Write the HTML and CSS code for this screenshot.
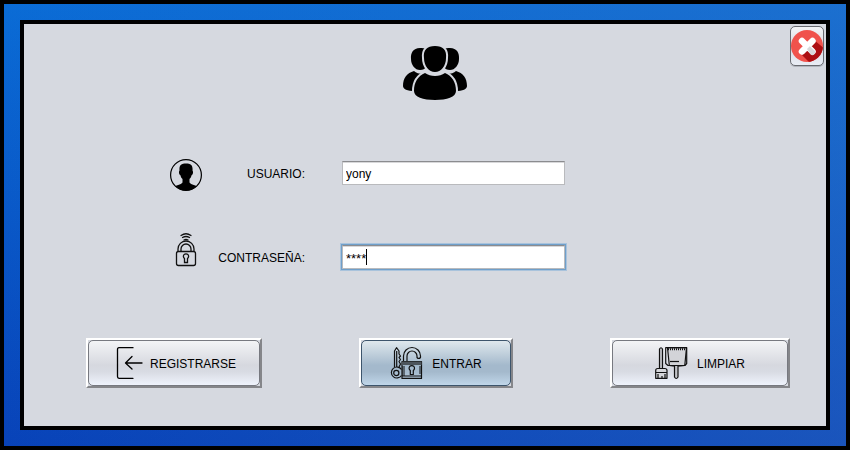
FILE: index.html
```html
<!DOCTYPE html>
<html lang="es">
<head>
<meta charset="utf-8">
<meta name="viewport" content="width=device-width, initial-scale=1">
<title>Inicio de sesión</title>
<link rel="stylesheet" href="styles.css">
</head>
<body>
<main class="panel">
  <button class="close" type="button" aria-label="Cerrar">
    <svg width="32" height="32" viewBox="0 0 32 32">
      <defs><clipPath id="disc"><circle cx="16" cy="16" r="16"/></clipPath></defs>
      <circle cx="16" cy="16" r="16" fill="#f0524c"/>
      <path clip-path="url(#disc)" d="M22 9l13 11v14H20L9 23l7-7z" fill="#ad0f12"/>
      <path d="M11 11l10.500 10.500M21.500 11L11 21.500" stroke="#fff" stroke-width="6.500" stroke-linecap="round"/>
      <path d="M16 19l2.800-2.800 5 4.600a2.800 2.800 0 0 1-4.400 3.400z" fill="#d8d8da"/>
    </svg>
  </button>
  <header class="header">
    <svg width="64" height="56" viewBox="0 0 64 56">
      <path d="M17 3C10 3 7.500 8 8 14c0 6 4 11 9 11 3 0 5-1 6-3V4c-1-1-4-1-6-1zM47 3c7 0 9.500 5 9 11 0 6-4 11-9 11-3 0-5-1-6-3V4c1-1 4-1 6-1z"/>
      <path d="M11 26C4 28 0 33 0 41c0 3 4 5 12 5l8-17c-4 0-7-1-9-3zM53 26c7 2 11 7 11 15 0 3-4 5-12 5l-8-17c4 0 7-1 9-3z"/>
      <g stroke="#d6d9e0" stroke-width="4" paint-order="stroke">
        <path d="M22 28c-7 3-11 9-11 18 0 6 9 9 21 9s21-3 21-9c0-9-4-15-11-18-3 2-6 3-10 3s-7-1-10-3z"/>
        <path d="M32 1c-8 0-12 4-11 12 0 8 5 14 11 14s11-6 11-14C44 5 40 1 32 1z"/>
      </g>
    </svg>
  </header>

  <form class="form" id="login">
    <div class="row">
      <svg width="32" height="50" viewBox="0 0 32 50">
        <defs><clipPath id="face"><circle cx="16" cy="27" r="15.500"/></clipPath></defs>
        <circle cx="16" cy="27" r="15.400" fill="none" stroke="#000" stroke-width="1.200"/>
        <path clip-path="url(#face)" d="M16 15.500c-5 0-7 2-6.500 7-1 1-.5 4 .8 4.500.5 2 1.200 3 2.200 4v3.500C11 37 6 37 2 40v5h28v-5c-4-3-9-3-10.500-5.500V31c1-1 1.700-2 2.200-4 1.300-.5 1.800-3.500.8-4.500.5-5-1.500-7-6.500-7z"/>
      </svg>
      <label for="user">USUARIO:</label>
      <span class="field"><input id="user" type="text" value="yony"></span>
    </div>
    <div class="row">
      <svg width="32" height="50" viewBox="0 0 32 50" fill="none" stroke="#111" stroke-width="1.300" stroke-linecap="round">
        <path d="M11 3.500q5-3.500 10 0M12.500 5.500q3.500-2 7 0M14 8q2-1 4 0"/>
        <path d="M8 19v-2a8 8 0 0 1 16 0v2M11 19v-2a5 5 0 0 1 10 0v2"/>
        <rect x="6.500" y="19.500" width="19" height="14" rx="2"/>
        <path d="M14.500 26.500a2.600 2.600 0 1 1 3 0v4h-3z"/>
      </svg>
      <label for="pass">CONTRASEÑA:</label>
      <span class="field focused"><input id="pass" type="text" value="****" autocomplete="off"><span class="caret"></span></span>
    </div>
  </form>

  <div class="actions">
    <button class="btn register" type="button">
      <svg width="28" height="32" viewBox="0 0 28 32" fill="none" stroke="#000" stroke-width="1.300" stroke-linecap="round" stroke-linejoin="round">
        <path d="M21 .7H7Q5.500.7 5.500 2.500v27q0 1.800 1.500 1.800h14M30 16H14M20 9.500L13.500 16l6.500 6"/>
      </svg>
      <span>REGISTRARSE</span>
    </button>
    <button class="btn enter" type="submit" form="login">
      <svg width="32" height="32" viewBox="0 0 32 32" fill="none" stroke="#111" stroke-width="1.200" stroke-linejoin="round">
        <path d="M4.500 20V4L6.500.7 9 4v3l1.500 2L9 10.500l1.500 2L9 14.500l1.500 2.500L9 20M6.700 4v16"/>
        <path d="M11.500 22.500a5.500 5.500 0 1 0 0 6"/>
        <circle cx="6.300" cy="26" r="2.600"/>
        <path d="M13.500 14V9a8.500 8.500 0 0 1 17 0v1.500q-1.700 2-3.500 0V9a5 5 0 0 0-10 0v5"/>
        <path d="M12 14.500h19.500v17H12z"/>
        <path d="M12 16.300h19.500" stroke-width="3.500" stroke="#4d555c"/>
        <path d="M12 20h3M12 22h3M12 24h3M12 26h3M12 28h3M29 20h2.500M29 22h2.500M29 24h2.500M29 26h2.500" stroke-width="1"/>
        <path d="M12 29h19.500M12 31.300h19.500"/>
        <path d="M20.300 23.500a2.700 2.700 0 1 1 3 0v4h-3z"/>
      </svg>
      <span>ENTRAR</span>
    </button>
    <button class="btn clean" type="button">
      <svg width="32" height="32" viewBox="0 0 32 32" fill="none" stroke="#111" stroke-width="1.200" stroke-linejoin="round">
        <path d="M4.500 21V2q1.500-2.500 3 0v19" fill="#c4c5c9"/>
        <path d="M.7 31.300V23.500Q.7 21.500 2.700 21.500h7Q12 21.500 12 23.500v7.800z" fill="#d5d6da"/>
        <path d="M.7 25.500H12M3 31v-4M7 31v-2M10 31v-4"/>
        <path d="M12.500.7h19l-1.700 17.600q-8.500 1.500-15.500 0z" fill="#d3d4d8"/>
        <path d="M10.700.7h21v15.800l-1.800 2H13l-2.300-2z"/>
        <path d="M13 2.300h17" stroke-width="2" stroke-dasharray="1 1"/>
        <path d="M15 14.500h9"/>
        <path d="M19.500 19v11q1.700 3 3.500 0V19" fill="#c4c5c9"/>
      </svg>
      <span>LIMPIAR</span>
    </button>
  </div>
</main>
</body>
</html>
```
FILE: styles.css
```css
* {
  box-sizing: border-box;
}

body {
  margin: 0;
  min-height: 100vh;
  display: flex;
  padding: 16px;
  border: 4px solid #000;
  background: linear-gradient(to right, rgba(60, 118, 195, 0), rgba(60, 118, 195, 0.35)),
    linear-gradient(#0a6cd6, #0842b8);
  font: 12px/16px "Liberation Sans", Arial, sans-serif;
  color: #000;
}

svg {
  display: block;
  flex: none;
  overflow: visible;
}

.panel {
  position: relative;
  flex: 1;
  border: 4px solid #000;
  background: #d6d9e0;
  padding-top: 21px;
}

.close {
  position: absolute;
  top: 2px;
  right: 2px;
  width: 34px;
  height: 40px;
  padding: 0;
  display: grid;
  place-items: center;
  border: 1px solid #686a70;
  border-radius: 5px;
  background: linear-gradient(#f4f5f7, #d8dae1 50%, #e9edf5);
  box-shadow: 0 1px 0 #b0b4bc;
}

.header {
  display: flex;
  justify-content: center;
  padding-left: 20px;
}

.form {
  display: grid;
  gap: 34px;
  margin: 47px 261px 56px 146px;
}

.row {
  display: grid;
  grid-template-columns: 32px 103px 1fr;
  align-items: center;
}

.row label {
  padding-top: 2px;
  text-align: right;
}

.field {
  position: relative;
  margin-left: 37px;
}

.field input {
  display: block;
  width: 100%;
  height: 24px;
  padding: 2px 3px 0;
  border: 1px solid #b9babd;
  border-top-color: #8b8c8f;
  border-radius: 0;
  outline: none;
  background: #fff;
  box-shadow: inset 0 1px 0 #d8d8da;
  font: inherit;
  color: #000;
}

.focused input {
  box-shadow: inset 0 1px 0 #d8d8da, 0 0 0 1px #6f9fca, 0 0 0 2px #a9c3dc;
  font-size: 13px;
}

.caret {
  position: absolute;
  left: 24px;
  top: 4px;
  width: 1px;
  height: 16px;
  background: #000;
}

.actions {
  display: flex;
  justify-content: space-between;
  padding: 0 36px 36px 62px;
}

.btn {
  position: relative;
  isolation: isolate;
  display: flex;
  align-items: center;
  justify-content: center;
  gap: 10px;
  height: 50px;
  padding: 0;
  border: 2px solid;
  border-color: #fff #85868a #85868a #fff;
  background: #d6d9e0;
  font: inherit;
  color: #000;
}

.btn span {
  padding-top: 2px;
}

.btn::before {
  content: "";
  position: absolute;
  inset: 0;
  z-index: -1;
  border: 1px solid #777980;
  border-radius: 5px;
  background: linear-gradient(#f3f4f6, #d6d8df 55%, #d8dbe3 70%, #eff3fc);
}

.register {
  width: 176px;
}

.enter {
  width: 154px;
}

.clean {
  width: 180px;
}

.enter::before {
  border-color: #3d556c;
  background: linear-gradient(#dfe8ed, #a4b9cc 55%, #a4b9cc 70%, #c0d6e9);
}
```
